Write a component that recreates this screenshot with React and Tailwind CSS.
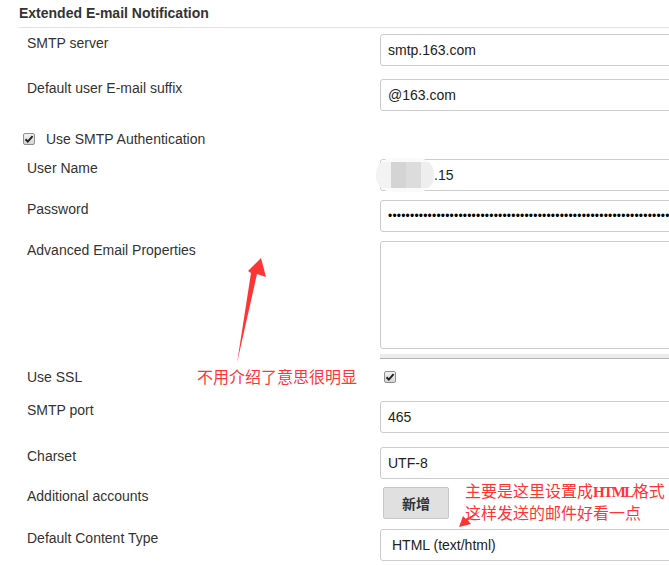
import React from 'react';

const sans = { fontFamily: '"Liberation Sans", Arial, sans-serif' };

// little old-style checkbox
const Check = () => (
  <span className="inline-flex h-[12px] w-[12px] items-center justify-center rounded-[2px] border border-[#8f8f8f] bg-gradient-to-b from-[#f2f2f2] to-[#d6d6d6]">
    <svg width="10" height="10" viewBox="0 0 10 10">
      <path d="M1.5 5.2 L3.8 7.6 L8.6 2.2" fill="none" stroke="#222" strokeWidth="2" />
    </svg>
  </span>
);

const Field = ({ children, className = '' }) => (
  <div className={`flex h-[32px] w-[320px] items-center rounded-[3px] border border-[#cccccc] bg-white pl-[7px] text-[14px] text-[#222] ${className}`}>
    {children}
  </div>
);

const Row = ({ label, mt, children }) => (
  <div className={`flex items-start ${mt}`}>
    <div className="w-[380px] shrink-0 pl-[27px] text-[14px] leading-[18px] text-[#333]">{label}</div>
    <div className="shrink-0">{children}</div>
  </div>
);

const App = () => {
  return (
    <div className="relative h-[565px] w-[669px] overflow-hidden bg-white" style={sans}>
      {/* Section header */}
      <div className="ml-[19px] flex h-[28px] items-center border-b border-[#e2e2e2] text-[14px] font-bold text-[#333]">
        Extended E-mail Notification
      </div>

      <Row label="SMTP server" mt="mt-[6px]">
        <Field>smtp.163.com</Field>
      </Row>
      <Row label="Default user E-mail suffix" mt="mt-[13px]">
        <Field>@163.com</Field>
      </Row>

      <div className="mt-[19px] flex h-[18px] items-center pl-[23px] text-[14px] text-[#333]">
        <Check />
        <span className="ml-[11px]">Use SMTP Authentication</span>
      </div>

      <Row label="User Name" mt="mt-[11px]">
        <Field className="overflow-visible">
          {/* blurred-out user name */}
          <span className="-ml-[12px] flex h-[34px] w-[58px] items-center overflow-hidden rounded-[16px] bg-[#fafafa]">
            <span className="h-[26px] w-[15px] bg-[#f3f3f3]" />
            <span className="h-[26px] w-[15px] bg-[#d4d4d4]" />
            <span className="h-[26px] w-[15px] bg-[#dcdcdc]" />
            <span className="h-[26px] w-[13px] bg-[#eeeeee]" />
          </span>
          <span>.15</span>
        </Field>
      </Row>
      <Row label="Password" mt="mt-[9px]">
        <Field className="overflow-hidden">
          <span className="whitespace-nowrap text-[12px] leading-none tracking-[0.2px] text-black">
            {'•'.repeat(72)}
          </span>
        </Field>
      </Row>
      <Row label="Advanced Email Properties" mt="mt-[9px]">
        <div className="h-[108px] w-[320px] rounded-[3px] border border-[#cccccc] bg-white" />
        <div className="mt-[5px] h-[5px] w-[320px] border-b border-[#b5b5b5] bg-[#ececec]" />
      </Row>

      <Row label="Use SSL" mt="mt-[9px]">
        <div className="ml-[4px] mt-[3px] flex">
          <Check />
        </div>
      </Row>
      <Row label="SMTP port" mt="mt-[15px]">
        <Field>465</Field>
      </Row>
      <Row label="Charset" mt="mt-[14px]">
        <Field>UTF-8</Field>
      </Row>
      <Row label="Additional accounts" mt="mt-[8px]">
        <button
          className="ml-[3px] h-[32px] w-[66px] rounded-[2px] border border-[#c8c8c8] bg-[#e0e0e0] text-[14px] font-bold text-[#333]"
          style={{ fontFamily: '"Noto Sans CJK SC", sans-serif' }}
        >
          新增
        </button>
      </Row>
      <Row label="Default Content Type" mt="mt-[10px]">
        <Field className="pl-[11px]">HTML (text/html)</Field>
      </Row>

      {/* annotations */}
      <svg className="pointer-events-none absolute left-0 top-0" width="669" height="565">
        <polygon points="261,258 266,277 257,274 237,363 251,273 248,271" fill="#ff3535" />
        <polygon points="481,511 468,520.5 471,524 459,527 463,516 466,519" fill="#ff3535" />
      </svg>
      <div
        className="pointer-events-none absolute left-[197px] top-[366px] whitespace-nowrap text-[16px] leading-[20px] text-[#ff3535]"
        style={{ fontFamily: '"Noto Sans CJK SC", sans-serif' }}
      >
        不用介绍了意思很明显
      </div>
      <div
        className="pointer-events-none absolute left-[465px] top-[480px] whitespace-nowrap text-[16px] leading-[20px] text-[#ff3535]"
        style={{ fontFamily: '"Noto Sans CJK SC", sans-serif' }}
      >
        <div>
          主要是这里设置成<span className="text-[15px] font-bold tracking-[-1.5px]" style={{ fontFamily: '"Liberation Serif", serif' }}>HTML</span>格式
        </div>
        <div>这样发送的邮件好看一点</div>
      </div>
    </div>
  );
};

export default App;
